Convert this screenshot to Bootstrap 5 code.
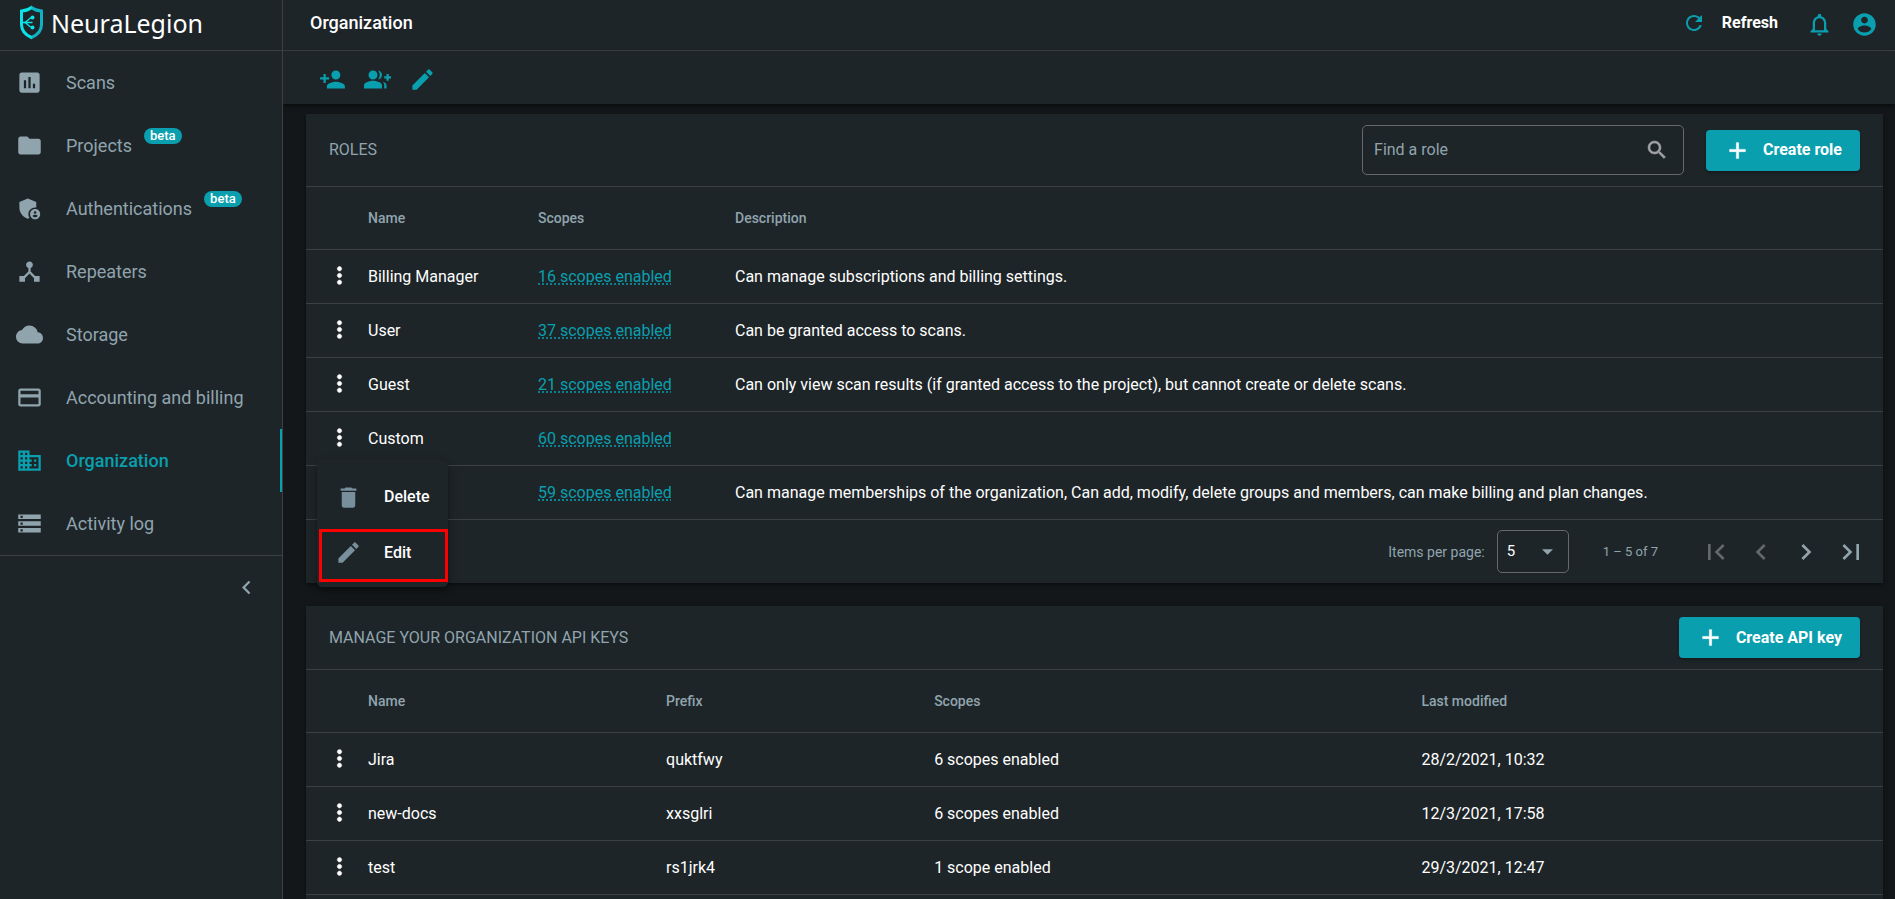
<!DOCTYPE html>
<html lang="en">
<head>
<meta charset="utf-8">
<meta name="viewport" content="width=device-width, initial-scale=1">
<title>NeuraLegion - Organization</title>
<link rel="stylesheet" href="https://cdn.jsdelivr.net/npm/bootstrap@5.3.0/dist/css/bootstrap.min.css">
<style>
  :root { --panel: #1e2528; --page: #131719; --line: #3b4043; --teal: #0a9fae; --muted: #90a4ae; }
  body { background: var(--page); color: #fff; font-family: Roboto, "Liberation Sans", sans-serif; font-size: 16px; line-height: 24px; }
  svg { fill: currentColor; flex: none; display: block; }
  .ic { width: 27px; height: 27px; }
  .ic-sm { width: 24px; height: 24px; }
  .ic-lg { width: 32px; height: 32px; }
  .icon-btn { background: none; border: 0; padding: 0; color: inherit; }
  .teal { color: var(--teal); }
  .muted { color: var(--muted); }
  .panel { background: var(--panel); }

  .sidebar { width: 283px; border-right: 1px solid var(--line); }
  .brand { height: 51px; padding: 0 0 5px 18px; border-bottom: 1px solid var(--line); color: #fff; font-family: "Noto Sans", sans-serif; font-size: 25px; line-height: 34px; gap: 6px; }
  .side-nav { border-bottom: 1px solid var(--line); }
  .side-nav .nav-link { height: 63px; padding: 0 0 0 16px; gap: 23px; color: var(--muted); font-size: 18px; border-right: 2px solid transparent; }
  .side-nav .nav-link.active { color: var(--teal); border-color: var(--teal); font-weight: 500; }
  .beta { position: relative; }
  .beta .badge { position: absolute; left: 100%; top: -6px; margin-left: 12px; height: 16px; padding: 0 6px; border-radius: 8px; background: var(--teal); font-size: 13px; line-height: 16px; font-weight: 500; }
  .collapse-row { padding: 18px 22px; }

  .topbar { height: 51px; padding: 0 17px 4px 27px; border-bottom: 1px solid var(--line); }
  .topbar h1 { font-size: 18px; font-weight: 500; margin: 0; }
  .topbar-actions { gap: 18px; padding-top: 2px; }
  .tools { height: 53px; padding: 4px 0 0 36px; gap: 18px; position: relative; box-shadow: 0 2px 4px rgba(0,0,0,.5); }
  .content { padding: 10px 12px 0 23px; gap: 23px; }

  .sheet { box-shadow: 0 2px 4px rgba(0,0,0,.4); }
  .sheet-head { padding: 11px 23px; border-bottom: 1px solid var(--line); gap: 22px; }
  .sheet-head h2 { font-size: 16px; line-height: 24px; margin: 0; font-weight: 400; color: var(--muted); }
  .search { width: 322px; height: 50px; border: 1px solid #65696c; border-radius: 5px; padding: 0 14px 0 11px; }
  .search input { background: none; border: 0; outline: 0; color: #fff; min-width: 0; padding: 0; }
  .search input::placeholder { color: var(--muted); opacity: 1; }
  .btn-main { height: 41px; padding: 0 17px; gap: 12px; border-radius: 4px; background: var(--teal); color: #fff; font-size: 16px; font-weight: 700; box-shadow: 0 2px 3px rgba(0,0,0,.3); }
  .btn-main:hover { background: #0b8f9d; color: #fff; }

  .grid-table { table-layout: fixed; width: 100%; margin: 0; border-collapse: separate; border-spacing: 0; }
  .grid-table th, .grid-table td { padding: 0; border-bottom: 1px solid var(--line); vertical-align: middle; white-space: nowrap; }
  .grid-table th { height: 63px; font-size: 14px; font-weight: 500; color: var(--muted); }
  .grid-table td { height: 54px; }
  .grid-table .kebab { position: relative; }
  .kebab > .icon-btn { padding: 5px 0 0 20px; }
  .scope { color: var(--teal); text-decoration: underline dotted; text-underline-offset: 2px; }

  .row-menu.dropdown-menu { top: 48px; left: 11px; min-width: 131px; padding: 10px 0 5px; border: 0; border-radius: 5px; background: var(--panel); box-shadow: 0 3px 8px rgba(0,0,0,.45); }
  .row-menu .dropdown-item { height: 54px; padding: 0 12px 0 18px; gap: 22px; color: #fff; font-weight: 500; }
  .row-menu .dropdown-item svg { color: #78909c; }
  .row-menu .dropdown-item:hover { background: #2a3236; }
  .row-menu .marked { height: 53px; width: 129px; margin: 5px 0 0 2px; padding: 0 0 6px 13px; border: 3px solid #f00; }

  .pager { padding: 10px 16px; font-size: 13px; color: var(--muted); }
  .pager label { font-size: 14px; }
  .pager .form-select { width: 72px; height: 43px; margin: 0 34px 0 12px; padding: 0 0 0 9px; border: 1px solid #65696c; border-radius: 5px; color: #fff; font-size: 15px; background: transparent url("data:image/svg+xml,%3Csvg xmlns='http://www.w3.org/2000/svg' viewBox='0 0 10 5'%3E%3Cpath d='M0 0l5 5 5-5z' fill='%2390a4ae'/%3E%3C/svg%3E") no-repeat right 15px center / 11px 6px; }
  .pager .form-select option { background: var(--panel); }
  .pager-nav { margin-left: 42px; gap: 13px; }
  .pager-nav :disabled { color: #62686b; }
</style>
</head>
<body>
<svg width="0" height="0" class="position-absolute" aria-hidden="true">
  <defs>
    <linearGradient id="lg" x1="0" x2="1"><stop offset="0.45" stop-color="#0ce3e6"/><stop offset="0.55" stop-color="#0fb2c4"/></linearGradient>
  </defs>
  <symbol id="i-scan" viewBox="0 0 24 24"><path d="M19 3H5c-1.1 0-2 .9-2 2v14c0 1.1.9 2 2 2h14c1.1 0 2-.9 2-2V5c0-1.1-.9-2-2-2zM9 17H7v-7h2v7zm4 0h-2V7h2v10zm4 0h-2v-4h2v4z"/></symbol>
  <symbol id="i-folder" viewBox="0 0 24 24"><path d="M10 4H4c-1.1 0-1.99.9-1.99 2L2 18c0 1.1.9 2 2 2h16c1.1 0 2-.9 2-2V8c0-1.1-.9-2-2-2h-8l-2-2z"/></symbol>
  <symbol id="i-auth" viewBox="0 0 24 24"><path d="M17 11c.34 0 .67.04 1 .09V6.27L10.5 3 3 6.27v4.91c0 4.54 3.2 8.79 7.5 9.82.55-.13 1.08-.32 1.6-.55-.69-.98-1.1-2.17-1.1-3.45 0-3.31 2.69-6 6-6z"/><path d="M17 12.500c-2.480 0-4.500 2.020-4.500 4.500s2.020 4.500 4.500 4.500 4.500-2.020 4.500-4.500-2.020-4.500-4.500-4.500zm0 1.880c.62 0 1.120.51 1.120 1.120s-.51 1.120-1.120 1.120-1.120-.51-1.120-1.120.5-1.120 1.120-1.120zm0 5.370c-.93 0-1.740-.46-2.240-1.170.05-.72 1.510-1.080 2.240-1.080s2.190.36 2.240 1.080c-.5.71-1.310 1.170-2.240 1.170z"/></symbol>
  <symbol id="i-hub" viewBox="0 0 24 24"><path d="M17 16l-4-4V8.820C14.160 8.400 15 7.300 15 6c0-1.660-1.340-3-3-3S9 4.340 9 6c0 1.300.84 2.400 2 2.820V12l-4 4H3v5h5v-3.050l4-4.200 4 4.200V21h5v-5h-4z"/></symbol>
  <symbol id="i-cloud" viewBox="0 0 24 24"><path d="M19.350 10.040C18.670 6.590 15.640 4 12 4 9.110 4 6.600 5.640 5.350 8.040 2.340 8.360 0 10.910 0 14c0 3.310 2.690 6 6 6h13c2.760 0 5-2.240 5-5 0-2.640-2.050-4.780-4.650-4.960z"/></symbol>
  <symbol id="i-card" viewBox="0 0 24 24"><path d="M20 4H4c-1.110 0-1.990.89-1.990 2L2 18c0 1.110.89 2 2 2h16c1.110 0 2-.89 2-2V6c0-1.110-.89-2-2-2zm0 14H4v-6h16v6zm0-9H4V6h16v3z"/></symbol>
  <symbol id="i-org" viewBox="0 0 24 24"><path d="M12 7V3H2v18h20V7H12zM6 19H4v-2h2v2zm0-4H4v-2h2v2zm0-4H4V9h2v2zm0-4H4V5h2v2zm4 12H8v-2h2v2zm0-4H8v-2h2v2zm0-4H8V9h2v2zm0-4H8V5h2v2zm10 12h-8v-2h2v-2h-2v-2h2v-2h-2V9h8v10zm-2-8h-2v2h2v-2zm0 4h-2v2h2v-2z"/></symbol>
  <symbol id="i-log" viewBox="0 0 24 24"><path d="M2 20h20v-4H2v4zm2-3h2v2H4v-2zM2 4v4h20V4H2zm4 3H4V5h2v2zm-4 7h20v-4H2v4zm2-3h2v2H4v-2z"/></symbol>
  <symbol id="i-left" viewBox="0 0 24 24"><path d="M15.410 7.410L14 6l-6 6 6 6 1.410-1.410L10.830 12z"/></symbol>
  <symbol id="i-right" viewBox="0 0 24 24"><path d="M10 6L8.590 7.410 13.170 12l-4.580 4.590L10 18l6-6z"/></symbol>
  <symbol id="i-first" viewBox="0 0 24 24"><path d="M18.410 16.590L13.820 12l4.590-4.590L17 6l-6 6 6 6zM6 6h2v12H6z"/></symbol>
  <symbol id="i-last" viewBox="0 0 24 24"><path d="M5.590 7.410L10.180 12l-4.590 4.590L7 18l6-6-6-6zM16 6h2v12h-2z"/></symbol>
  <symbol id="i-adduser" viewBox="0 0 24 24"><path d="M15 12c2.210 0 4-1.790 4-4s-1.790-4-4-4-4 1.790-4 4 1.790 4 4 4zm-9-2V7H4v3H1v2h3v3h2v-3h3v-2H6zm9 4c-2.670 0-8 1.340-8 4v2h16v-2c0-2.660-5.330-4-8-4z"/></symbol>
  <symbol id="i-addgroup" viewBox="0 0 24 24"><path d="M22 9V7h-2v2h-2v2h2v2h2v-2h2V9zM8 12c2.210 0 4-1.790 4-4s-1.790-4-4-4-4 1.790-4 4 1.790 4 4 4zM8 13c-2.670 0-8 1.340-8 4v3h16v-3c0-2.660-5.330-4-8-4zM12.510 4.050C13.430 5.110 14 6.490 14 8s-.57 2.890-1.490 3.950C14.470 11.700 16 10.040 16 8s-1.530-3.700-3.490-3.950zM16.530 13.830C17.420 14.660 18 15.700 18 17v3h2v-3c0-1.450-1.590-2.510-3.470-3.170z"/></symbol>
  <symbol id="i-edit" viewBox="0 0 24 24"><path d="M3 17.250V21h3.750L17.810 9.940l-3.750-3.750L3 17.250zM20.710 7.040c.39-.39.39-1.020 0-1.410l-2.340-2.340c-.39-.39-1.020-.39-1.410 0l-1.830 1.830 3.750 3.750 1.830-1.830z"/></symbol>
  <symbol id="i-trash" viewBox="0 0 24 24"><path d="M6 19c0 1.100.9 2 2 2h8c1.100 0 2-.9 2-2V7H6v12zM19 4h-3.500l-1-1h-5l-1 1H5v2h14V4z"/></symbol>
  <symbol id="i-refresh" viewBox="0 0 24 24"><path d="M17.650 6.350C16.200 4.900 14.210 4 12 4c-4.420 0-7.990 3.580-7.990 8s3.570 8 7.990 8c3.730 0 6.840-2.550 7.730-6h-2.080c-.82 2.330-3.040 4-5.650 4-3.310 0-6-2.690-6-6s2.690-6 6-6c1.660 0 3.140.69 4.220 1.780L13 11h7V4l-2.350 2.350z"/></symbol>
  <symbol id="i-bell" viewBox="0 0 24 24"><path d="M12 22c1.100 0 2-.9 2-2h-4c0 1.100.9 2 2 2zm6-6v-5c0-3.070-1.630-5.640-4.500-6.320V4c0-.83-.67-1.500-1.500-1.500s-1.500.67-1.500 1.500v.68C7.640 5.360 6 7.920 6 11v5l-2 2v1h16v-1l-2-2zm-2 1H8v-6c0-2.480 1.510-4.500 4-4.500s4 2.020 4 4.500v6z"/></symbol>
  <symbol id="i-account" viewBox="0 0 24 24"><path d="M12 2C6.480 2 2 6.480 2 12s4.480 10 10 10 10-4.480 10-10S17.520 2 12 2zm0 3c1.660 0 3 1.340 3 3s-1.340 3-3 3-3-1.340-3-3 1.340-3 3-3zm0 14.200c-2.500 0-4.710-1.280-6-3.220.03-1.990 4-3.080 6-3.080 1.990 0 5.970 1.090 6 3.080-1.290 1.940-3.500 3.220-6 3.220z"/></symbol>
  <symbol id="i-search" viewBox="0 0 24 24"><path d="M15.500 14h-.79l-.28-.27C15.410 12.590 16 11.110 16 9.500 16 5.910 13.090 3 9.500 3S3 5.910 3 9.500 5.910 16 9.500 16c1.610 0 3.090-.59 4.230-1.570l.27.28v.79l5 4.990L20.490 19l-4.990-5zm-6 0C7.010 14 5 11.990 5 9.500S7.010 5 9.500 5 14 7.010 14 9.500 11.990 14 9.500 14z" stroke="currentColor" stroke-width=".5"/></symbol>
  <symbol id="i-plus" viewBox="0 0 24 24"><path d="M19 13h-6v6h-2v-6H5v-2h6V5h2v6h6v2z" stroke="currentColor" stroke-width=".5"/></symbol>
  <symbol id="i-more" viewBox="0 0 24 24"><path d="M12 8c1.100 0 2-.9 2-2s-.9-2-2-2-2 .9-2 2 .9 2 2 2zm0 2c-1.100 0-2 .9-2 2s.9 2 2 2 2-.9 2-2-.9-2-2-2zm0 6c-1.100 0-2 .9-2 2s.9 2 2 2 2-.9 2-2-.9-2-2-2z" stroke="currentColor" stroke-width=".4"/></symbol>
</svg>

<div class="d-flex vh-100 overflow-hidden">
  <aside class="sidebar panel d-flex flex-column flex-shrink-0">
    <a href="#" class="brand d-flex align-items-center text-decoration-none">
      <svg width="27" height="35" viewBox="0 0 27 35" aria-hidden="true">
        <path d="M13.500 2.500C10.500 4.900 7 5.800 3.500 6.100V19.500C3.500 26 7.500 30 13.500 32.500 19.500 30 23.500 26 23.500 19.500V6.100C20 5.800 16.500 4.900 13.500 2.500Z" fill="none" stroke="url(#lg)" stroke-width="3"/>
        <path d="M3.500 17.500H14.500M6 17.500C10 17.500 10 12.500 14.500 12.500M6 17.500C10 17.500 10 22.500 14.500 22.500" fill="none" stroke="#0ce3e6" stroke-width="1.500"/>
        <circle cx="14.500" cy="12.500" r="2" fill="#0ce3e6"/><circle cx="14.500" cy="22.500" r="2" fill="#0ce3e6"/>
      </svg>
      <span>NeuraLegion</span>
    </a>
    <nav class="side-nav nav flex-column flex-nowrap" aria-label="Main">
      <a class="nav-link d-flex align-items-center" href="#"><svg class="ic"><use href="#i-scan"/></svg><span>Scans</span></a>
      <a class="nav-link d-flex align-items-center" href="#"><svg class="ic"><use href="#i-folder"/></svg><span class="beta">Projects<span class="badge">beta</span></span></a>
      <a class="nav-link d-flex align-items-center" href="#"><svg class="ic"><use href="#i-auth"/></svg><span class="beta">Authentications<span class="badge">beta</span></span></a>
      <a class="nav-link d-flex align-items-center" href="#"><svg class="ic"><use href="#i-hub"/></svg><span>Repeaters</span></a>
      <a class="nav-link d-flex align-items-center" href="#"><svg class="ic"><use href="#i-cloud"/></svg><span>Storage</span></a>
      <a class="nav-link d-flex align-items-center" href="#"><svg class="ic"><use href="#i-card"/></svg><span>Accounting and billing</span></a>
      <a class="nav-link d-flex align-items-center active" aria-current="page" href="#"><svg class="ic"><use href="#i-org"/></svg><span>Organization</span></a>
      <a class="nav-link d-flex align-items-center" href="#"><svg class="ic"><use href="#i-log"/></svg><span>Activity log</span></a>
    </nav>
    <div class="collapse-row d-flex justify-content-end muted">
      <button class="icon-btn" aria-label="Collapse menu"><svg class="ic"><use href="#i-left"/></svg></button>
    </div>
  </aside>

  <div class="d-flex flex-column flex-grow-1 overflow-hidden">
    <header class="topbar panel d-flex align-items-center flex-shrink-0">
      <h1 class="me-auto">Organization</h1>
      <button class="icon-btn d-flex align-items-center me-4 fw-bold"><svg class="ic-sm teal me-3"><use href="#i-refresh"/></svg>Refresh</button>
      <div class="topbar-actions teal d-flex ms-1">
        <button class="icon-btn" aria-label="Notifications"><svg class="ic"><use href="#i-bell"/></svg></button>
        <button class="icon-btn" aria-label="Account"><svg class="ic"><use href="#i-account"/></svg></button>
      </div>
    </header>
    <div class="tools panel teal d-flex align-items-center flex-shrink-0">
      <button class="icon-btn" aria-label="Add member"><svg class="ic"><use href="#i-adduser"/></svg></button>
      <button class="icon-btn" aria-label="Add group"><svg class="ic"><use href="#i-addgroup"/></svg></button>
      <button class="icon-btn" aria-label="Edit organization"><svg class="ic"><use href="#i-edit"/></svg></button>
    </div>

    <main class="content d-flex flex-column flex-grow-1">
      <section class="sheet panel">
        <div class="sheet-head d-flex align-items-center">
          <h2 class="me-auto">ROLES</h2>
          <label class="search d-flex align-items-center">
            <input class="flex-grow-1" type="search" placeholder="Find a role" aria-label="Find a role">
            <svg class="ic-sm" color="#a0a3a5"><use href="#i-search"/></svg>
          </label>
          <button class="btn btn-main d-flex align-items-center"><svg class="ic"><use href="#i-plus"/></svg>Create role</button>
        </div>
        <table class="grid-table">
          <colgroup><col style="width:62px"><col style="width:170px"><col style="width:197px"><col></colgroup>
          <thead><tr><th></th><th scope="col">Name</th><th scope="col">Scopes</th><th scope="col">Description</th></tr></thead>
          <tbody>
            <tr><td class="kebab"><button class="icon-btn" aria-label="Actions"><svg class="ic"><use href="#i-more"/></svg></button></td><td>Billing Manager</td><td><a class="scope" href="#">16 scopes enabled</a></td><td>Can manage subscriptions and billing settings.</td></tr>
            <tr><td class="kebab"><button class="icon-btn" aria-label="Actions"><svg class="ic"><use href="#i-more"/></svg></button></td><td>User</td><td><a class="scope" href="#">37 scopes enabled</a></td><td>Can be granted access to scans.</td></tr>
            <tr><td class="kebab"><button class="icon-btn" aria-label="Actions"><svg class="ic"><use href="#i-more"/></svg></button></td><td>Guest</td><td><a class="scope" href="#">21 scopes enabled</a></td><td>Can only view scan results (if granted access to the project), but cannot create or delete scans.</td></tr>
            <tr><td class="kebab"><button class="icon-btn" aria-label="Actions" aria-expanded="true"><svg class="ic"><use href="#i-more"/></svg></button>
              <div class="dropdown-menu row-menu show">
                <button class="dropdown-item d-flex align-items-center"><svg class="ic"><use href="#i-trash"/></svg>Delete</button>
                <button class="dropdown-item d-flex align-items-center marked"><svg class="ic"><use href="#i-edit"/></svg>Edit</button>
              </div></td><td>Custom</td><td><a class="scope" href="#">60 scopes enabled</a></td><td></td></tr>
            <tr><td></td><td></td><td><a class="scope" href="#">59 scopes enabled</a></td><td>Can manage memberships of the organization, Can add, modify, delete groups and members, can make billing and plan changes.</td></tr>
          </tbody>
        </table>
        <div class="pager d-flex align-items-center justify-content-end">
          <label for="per-page">Items per page:</label>
          <select id="per-page" class="form-select"><option>5</option><option>10</option><option>25</option></select>
          <span>1 – 5 of 7</span>
          <div class="pager-nav d-flex">
            <button class="icon-btn" aria-label="First page" disabled><svg class="ic-lg"><use href="#i-first"/></svg></button>
            <button class="icon-btn" aria-label="Previous page" disabled><svg class="ic-lg"><use href="#i-left"/></svg></button>
            <button class="icon-btn" aria-label="Next page"><svg class="ic-lg"><use href="#i-right"/></svg></button>
            <button class="icon-btn" aria-label="Last page"><svg class="ic-lg"><use href="#i-last"/></svg></button>
          </div>
        </div>
      </section>

      <section class="sheet panel flex-grow-1">
        <div class="sheet-head d-flex align-items-center">
          <h2 class="me-auto">MANAGE YOUR ORGANIZATION API KEYS</h2>
          <button class="btn btn-main d-flex align-items-center"><svg class="ic"><use href="#i-plus"/></svg>Create API key</button>
        </div>
        <table class="grid-table">
          <colgroup><col style="width:62px"><col style="width:18.9%"><col style="width:17%"><col style="width:30.9%"><col></colgroup>
          <thead><tr><th></th><th scope="col">Name</th><th scope="col">Prefix</th><th scope="col">Scopes</th><th scope="col">Last modified</th></tr></thead>
          <tbody>
            <tr><td class="kebab"><button class="icon-btn" aria-label="Actions"><svg class="ic"><use href="#i-more"/></svg></button></td><td>Jira</td><td>quktfwy</td><td>6 scopes enabled</td><td>28/2/2021, 10:32</td></tr>
            <tr><td class="kebab"><button class="icon-btn" aria-label="Actions"><svg class="ic"><use href="#i-more"/></svg></button></td><td>new-docs</td><td>xxsglri</td><td>6 scopes enabled</td><td>12/3/2021, 17:58</td></tr>
            <tr><td class="kebab"><button class="icon-btn" aria-label="Actions"><svg class="ic"><use href="#i-more"/></svg></button></td><td>test</td><td>rs1jrk4</td><td>1 scope enabled</td><td>29/3/2021, 12:47</td></tr>
          </tbody>
        </table>
      </section>
    </main>
  </div>
</div>
<script src="https://cdn.jsdelivr.net/npm/bootstrap@5.3.0/dist/js/bootstrap.bundle.min.js"></script>
</body>
</html>
